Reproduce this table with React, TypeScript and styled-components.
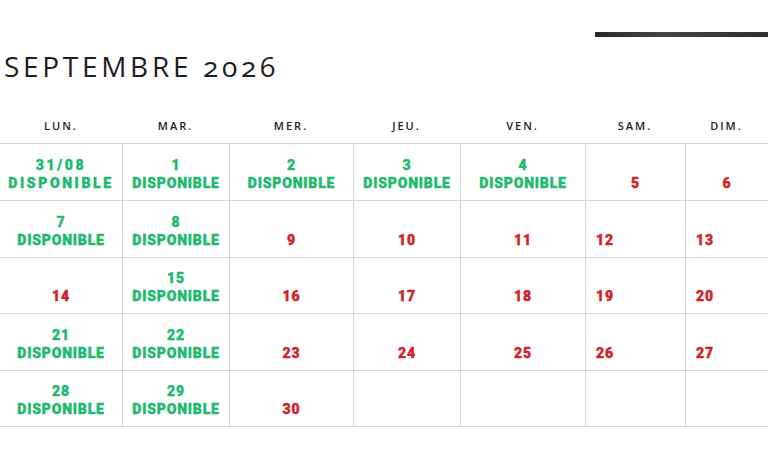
import React from 'react';
import styled, { createGlobalStyle } from 'styled-components';

const GlobalStyle = createGlobalStyle`
  html, body {
    margin: 0;
    padding: 0;
    background: #fff;
  }
  body {
    width: 768px;
    height: 470px;
    overflow: hidden;
  }
`;

const COLS = [122, 107, 124, 107, 125, 100, 83];
const ROWS = [57, 57, 56, 57, 56];
const DAYS = ['LUN.', 'MAR.', 'MER.', 'JEU.', 'VEN.', 'SAM.', 'DIM.'];

type Day = { label: string; free: boolean; wide?: boolean; left?: boolean } | null;

const free = (label: string, wide = false): Day => ({ label, free: true, wide });
const busy = (label: string, left = false): Day => ({ label, free: false, left });

const WEEKS: Day[][] = [
  [free('31/08', true), free('1'), free('2'), free('3'), free('4'), busy('5'), busy('6')],
  [free('7'), free('8'), busy('9'), busy('10'), busy('11'), busy('12', true), busy('13', true)],
  [busy('14'), free('15'), busy('16'), busy('17'), busy('18'), busy('19', true), busy('20', true)],
  [free('21'), free('22'), busy('23'), busy('24'), busy('25'), busy('26', true), busy('27', true)],
  [free('28'), free('29'), busy('30'), null, null, null, null],
];

const Page = styled.div`
  width: 768px;
  display: flex;
  flex-direction: column;
`;

const TopBar = styled.div`
  display: flex;
  justify-content: flex-end;
  padding-top: 32px;
`;

const Bar = styled.div`
  width: 173px;
  height: 5px;
  background: linear-gradient(90deg, #2a2a2a, #444 40%, #2e2e2e);
`;

const Title = styled.h1`
  margin: 15px 0 0 4px;
  font-family: 'Open Sans', 'Lato', sans-serif;
  font-weight: 400;
  font-size: 28px;
  line-height: 28px;
  letter-spacing: 3.7px;
  color: #1e1e1e;
  font-variant-numeric: oldstyle-nums;
`;

const HeaderRow = styled.div`
  display: grid;
  grid-template-columns: ${COLS.map((c) => `${c}px`).join(' ')};
  height: 18px;
  margin-top: 36px;
  margin-bottom: 9px;
`;

const DayName = styled.div`
  display: flex;
  align-items: center;
  justify-content: center;
  font-family: 'Open Sans', sans-serif;
  font-weight: 600;
  font-size: 11px;
  letter-spacing: 2px;
  color: #222;
`;

const Grid = styled.div`
  display: grid;
  grid-template-columns: ${COLS.map((c) => `${c}px`).join(' ')};
  grid-template-rows: ${ROWS.map((r) => `${r}px`).join(' ')};
  border-top: 1px solid #d4d4d4;
`;

const Cell = styled.div<{ $first: boolean; $left?: boolean }>`
  display: flex;
  flex-direction: column;
  justify-content: flex-end;
  align-items: ${(p) => (p.$left ? 'flex-start' : 'center')};
  padding: 0 0 8px ${(p) => (p.$left ? '10px' : '0')};
  border-bottom: 1px solid #d4d4d4;
  border-left: ${(p) => (p.$first ? 'none' : '1px solid #d4d4d4')};
`;

const Line = styled.span<{ $free: boolean; $wide?: boolean }>`
  display: block;
  height: 18px;
  line-height: 18px;
  font-family: 'Roboto', 'Liberation Sans', sans-serif;
  font-weight: 900;
  font-size: 14px;
  letter-spacing: ${(p) => (p.$wide ? '2.6px' : '0.8px')};
  color: ${(p) => (p.$free ? '#20b96e' : '#cf2329')};
  -webkit-text-stroke: 0.4px ${(p) => (p.$free ? '#20b96e' : '#cf2329')};
  white-space: nowrap;
`;

export default function App() {
  return (
    <Page>
      <GlobalStyle />
      <TopBar>
        <Bar />
      </TopBar>
      <Title>SEPTEMBRE 2026</Title>
      <HeaderRow>
        {DAYS.map((d) => (
          <DayName key={d}>{d}</DayName>
        ))}
      </HeaderRow>
      <Grid>
        {WEEKS.map((week, wi) =>
          week.map((day, di) => (
            <Cell key={`${wi}-${di}`} $first={di === 0} $left={day?.left}>
              {day && day.free && (
                <>
                  <Line $free $wide={day.wide}>{day.label}</Line>
                  <Line $free $wide={day.wide}>DISPONIBLE</Line>
                </>
              )}
              {day && !day.free && <Line $free={false}>{day.label}</Line>}
            </Cell>
          ))
        )}
      </Grid>
    </Page>
  );
}
